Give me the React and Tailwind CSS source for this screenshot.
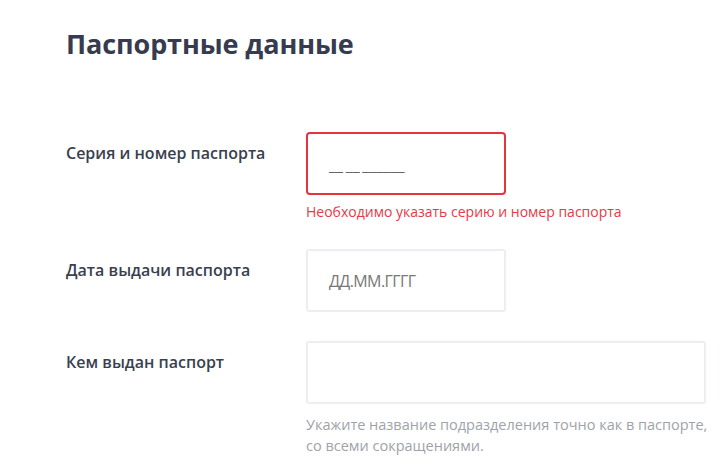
import React from "react";

export default function App() {
  return (
    <div className="w-[728px] h-[463px] bg-white overflow-hidden" style={{ fontFamily: '"Open Sans", sans-serif' }}>
      <div className="pl-[66px] pt-[24px]">
        <h1 className="text-[27px] leading-[40px] font-bold text-[#363b4f] tracking-[-0.1px]">Паспортные данные</h1>
        <div className="mt-[68px] flex flex-col">
          <div className="flex">
            <div className="w-[240px] pt-[10px] text-[16px] leading-[22px] font-semibold text-[#3a3f50]">Серия и номер паспорта</div>
            <div className="flex flex-col">
              <div className="w-[200px] h-[63px] border-2 border-[#e8323c] rounded-[4px] flex items-center pl-[21px] pt-[2px]">
                <span className="text-[16px] text-[#666] [word-spacing:-1.5px]">__ __ ______</span>
              </div>
              <div className="mt-[8px] text-[14px] leading-[18px] text-[#e53a47]">Необходимо указать серию и номер паспорта</div>
            </div>
          </div>
          <div className="flex mt-[28px]">
            <div className="w-[240px] pt-[10px] text-[16px] leading-[22px] font-semibold text-[#3a3f50]">Дата выдачи паспорта</div>
            <div className="w-[200px] h-[63px] border-2 border-[#eceef3] rounded-[3px] flex items-center pl-[21px]">
              <span className="text-[16px] text-[#777] tracking-[-0.6px]">ДД.ММ.ГГГГ</span>
            </div>
          </div>
          <div className="flex mt-[29px]">
            <div className="w-[240px] pt-[10px] text-[16px] leading-[22px] font-semibold text-[#3a3f50]">Кем выдан паспорт</div>
            <div className="flex flex-col">
              <div className="w-[400px] h-[63px] border-2 border-[#eceef3] rounded-[3px]"></div>
              <div className="mt-[10px] text-[14.5px] leading-[21px] text-[#9ea3a9]">
                Укажите название подразделения точно как в паспорте,<br />со всеми сокращениями.
              </div>
            </div>
          </div>
        </div>
      </div>
    </div>
  );
}
